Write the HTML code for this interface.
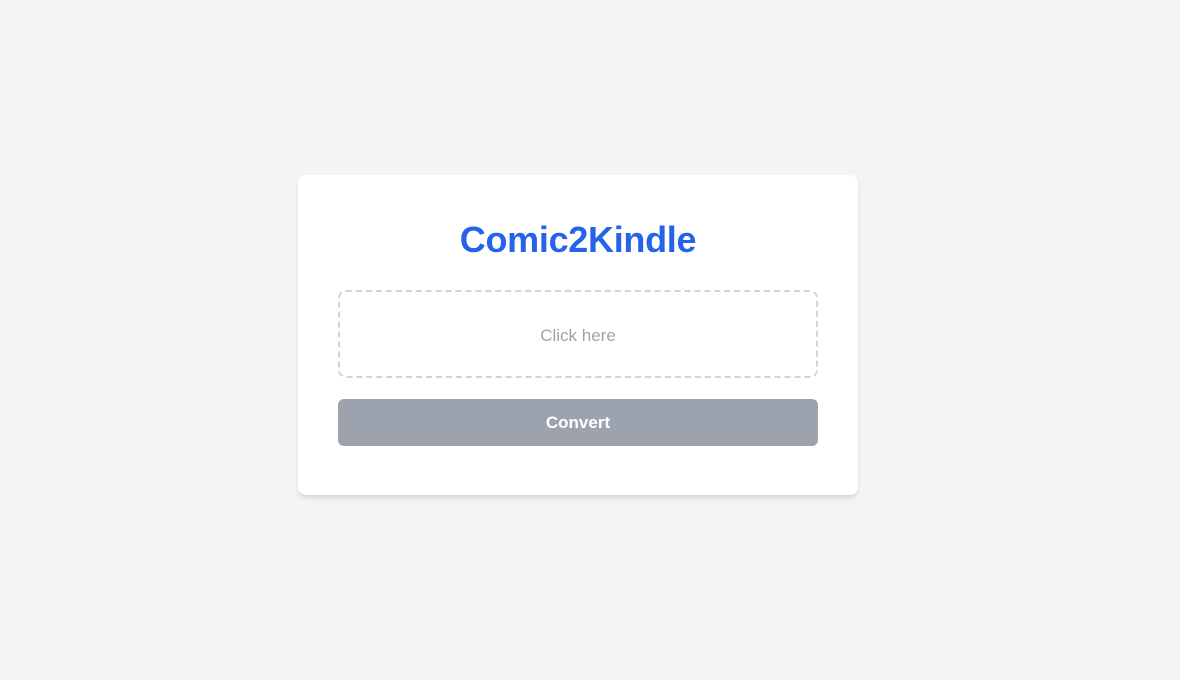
<!DOCTYPE html>
<html><head><style>
html,body{margin:0;padding:0;width:1180px;height:680px;background:#f3f4f6;font-family:"Liberation Sans",sans-serif;}
.card{position:absolute;left:298px;top:175px;width:560px;height:320px;background:#fff;border-radius:8px;box-shadow:0 4px 6px -1px rgba(0,0,0,.1),0 2px 4px -1px rgba(0,0,0,.06);}
h1{position:absolute;left:298px;width:560px;top:218px;margin:0;text-align:center;color:#2563eb;font-size:36px;font-weight:bold;line-height:44px;letter-spacing:-0.3px;}
.drop{position:absolute;left:338px;top:290px;width:476px;height:84px;border:2px dashed #d1d5db;border-radius:8px;display:flex;align-items:center;justify-content:center;color:#9ca3af;font-size:17px;padding-top:3px;box-sizing:content-box;height:81px;}
.btn{position:absolute;left:338px;top:399px;width:480px;height:47px;background:#9ca3af;border-radius:6px;color:#fff;font-weight:bold;font-size:17px;display:flex;align-items:center;justify-content:center;padding-top:1px;box-sizing:border-box;}
</style></head><body>
<div class="card"></div>
<h1>Comic2Kindle</h1>
<div class="drop">Click here</div>
<div class="btn">Convert</div>
</body></html>
